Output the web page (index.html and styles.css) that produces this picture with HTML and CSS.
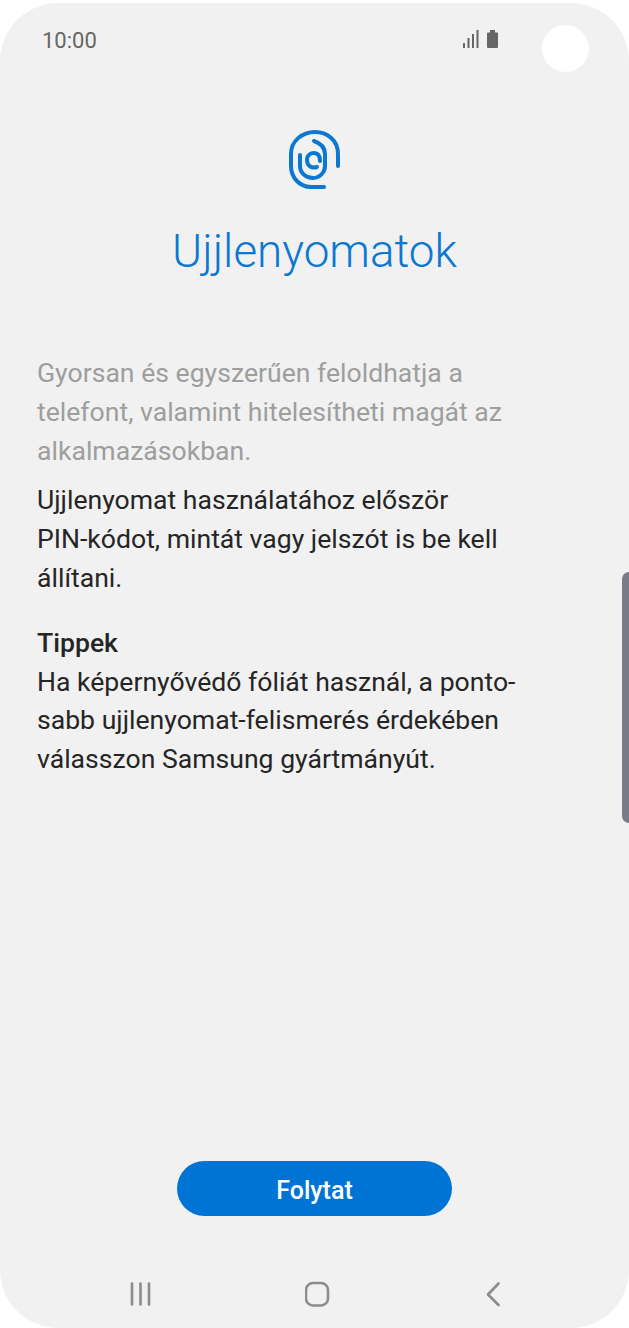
FILE: index.html
```html
<!DOCTYPE html>
<html lang="hu">
<head>
    <meta charset="UTF-8">
    <meta name="viewport" content="width=device-width, initial-scale=1.0">
    <title>Ujjlenyomatok</title>
    <link rel="stylesheet" href="styles.css">
</head>
<body>
    <div class="telefon">
        <div class="status">
            <span class="ido">10:00</span>
            <svg class="status-ikon" width="40" height="20" viewBox="0 0 40 20">
                <g fill="#666">
                    <rect x="1" y="14" width="2" height="5"/>
                    <rect x="5.500" y="9" width="2" height="10"/>
                    <rect x="10" y="5" width="2" height="14"/>
                    <rect x="14.500" y="1" width="2" height="18"/>
                    <path d="M25 4.500q0-1 1-1h2v-2.500h5v2.500h2q1 0 1 1v13.500q0 1-1 1h-9q-1 0-1-1z"/>
                </g>
            </svg>
        </div>
        <div class="camera"></div>

        <div class="conteudo">
            <svg class="digital" width="90" height="90" viewBox="0 0 90 90" fill="none" stroke="#0a78d2" stroke-width="4" stroke-linecap="round">
                <path d="M68 50V38C68 24 57 16 45 16C32 16 21 25 21 38V50C21 62 30 71 41 71H54"/>
                <path d="M30 39V50C30 57 36 62 43 62C50 62 55 56 55 50V38C55 31 50 27 44 25"/>
                <path d="M47 51C41 53 37 49 37 44C37 39 41 37 44 37C48 37 50 40 50 45"/>
            </svg>
            <h1>Ujjlenyomatok</h1>

            <p class="texto cinza">Gyorsan és egyszerűen feloldhatja a<br>telefont, valamint hitelesítheti magát az<br>alkalmazásokban.</p>
            <p class="texto aviso">Ujjlenyomat használatához először<br>PIN-kódot, mintát vagy jelszót is be kell<br>állítani.</p>
            <p class="texto dicas"><strong>Tippek</strong><br>Ha képernyővédő fóliát használ, a ponto-<br>sabb ujjlenyomat-felismerés érdekében<br>válasszon Samsung gyártmányút.</p>
        </div>

        <div class="acao">
            <button type="button">Folytat</button>
        </div>

        <div class="navegacao">
            <svg width="26" height="26" viewBox="0 0 26 26" fill="none" stroke="#8c8c8c" stroke-width="2.600" stroke-linecap="round" stroke-linejoin="round">
                <path d="M3 2.500V23.500M11.500 2.500V23.500M20 2.500V23.500"/>
            </svg>
            <svg width="26" height="26" viewBox="0 0 26 26" fill="none" stroke="#8c8c8c" stroke-width="2.600">
                <rect x="1" y="2" width="22" height="22.500" rx="7"/>
            </svg>
            <svg width="26" height="26" viewBox="0 0 26 26" fill="none" stroke="#8c8c8c" stroke-width="2.600" stroke-linecap="round" stroke-linejoin="round">
                <path d="M17.500 2.500L7 13.500L17.500 24"/>
            </svg>
        </div>

        <div class="barra"></div>
    </div>
</body>
</html>
```

FILE: styles.css
```css
html, body {
    margin: 0;
    padding: 0;
    background-color: white;
}

body {
    font-family: Roboto, "Noto Sans", sans-serif;
    height: 1328px;
    overflow: hidden;
}

.telefon {
    position: relative;
    box-sizing: border-box;
    height: 1325px;
    margin-top: 3px;
    background-color: #f1f1f1;
    border-radius: 58px;
    display: flex;
    flex-direction: column;
}

.status {
    display: flex;
    justify-content: space-between;
    align-items: center;
    padding: 20px 127px 0 42px;
    height: 33px;
}

.ido {
    margin-top: 2px;
    font-size: 22px;
    color: #666;
}

.status-ikon {
    margin-top: -1px;
}

.camera {
    position: absolute;
    top: 22px;
    left: 542px;
    width: 47px;
    height: 47px;
    border-radius: 50%;
    background-color: white;
}

.conteudo {
    flex: 1;
    padding: 60px 37px 0 37px;
}

.digital {
    display: block;
    margin: 0 auto;
}

h1 {
    margin: 19px 0 75px 0;
    font-size: 45.800px;
    font-weight: 300;
    line-height: 54px;
    text-align: center;
    color: #0a78d2;
}

.texto {
    margin: 0;
    font-size: 26.600px;
    line-height: 38.800px;
    color: #252525;
}

.cinza {
    color: #9e9e9e;
}

.aviso {
    margin-top: 11px;
}

.dicas {
    margin-top: 26px;
}

.dicas strong {
    font-weight: 500;
}

.acao {
    display: flex;
    justify-content: center;
}

button {
    width: 275px;
    height: 55px;
    padding-top: 4px;
    border: none;
    border-radius: 28px;
    background-color: #0074d4;
    color: white;
    font-family: inherit;
    font-size: 25px;
    font-weight: 500;
}

.navegacao {
    display: flex;
    justify-content: space-between;
    padding: 65px 122px 21px 129px;
}

.barra {
    position: absolute;
    top: 569px;
    right: 0;
    width: 7px;
    height: 251px;
    background-color: #7b7b87;
    border-radius: 7px 0 0 7px;
}
```
